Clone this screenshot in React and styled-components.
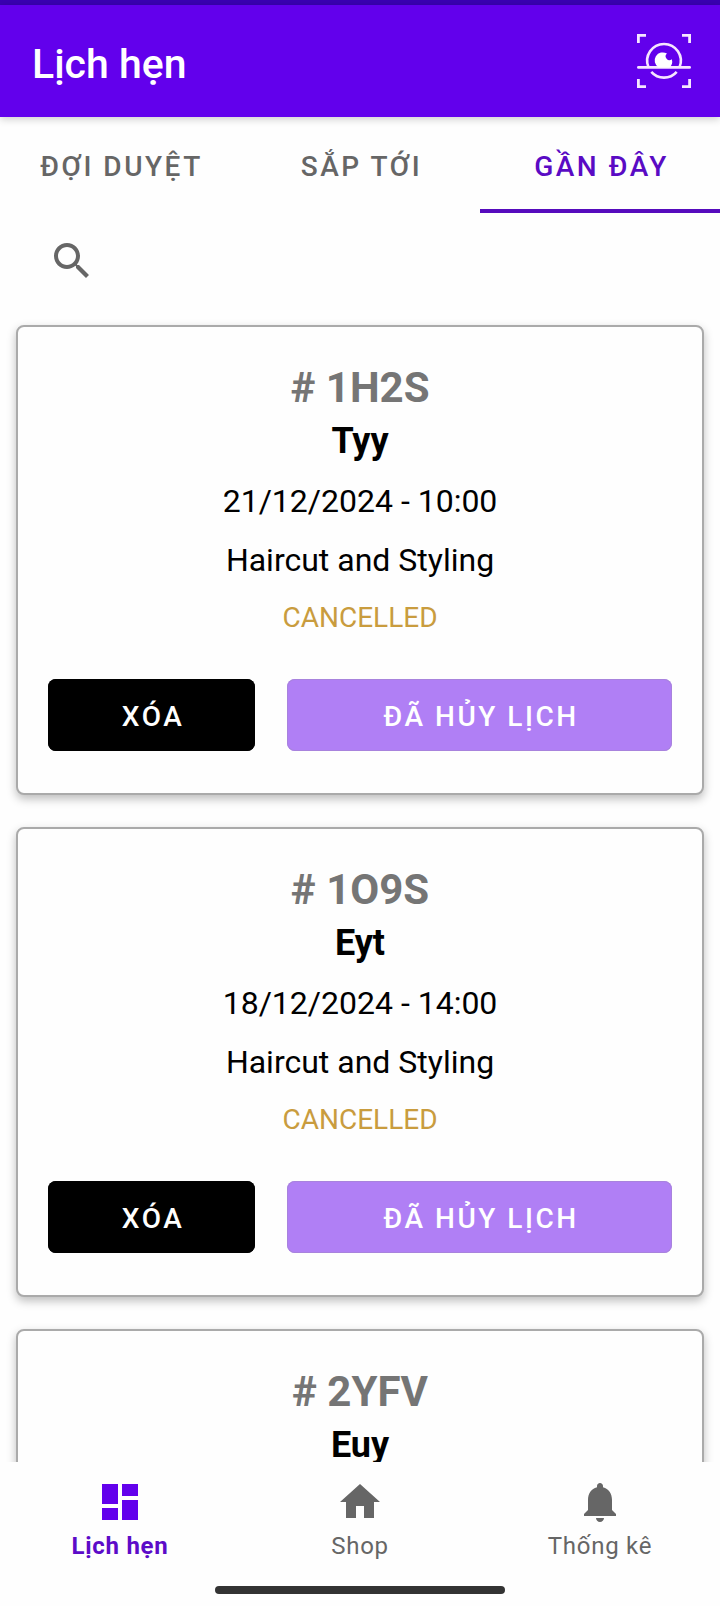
import React from "react";
import styled, { createGlobalStyle } from "styled-components";

const GlobalStyle = createGlobalStyle`
  *, *::before, *::after { box-sizing: border-box; }
  body {
    margin: 0;
    background: #fefefe;
    color: #000;
    font-family: Roboto, "Noto Sans", sans-serif;
  }
  button { font-family: inherit; border: 0; padding: 0; cursor: pointer; }
  h1, h2, h3, p { margin: 0; }
`;

const Screen = styled.div`
  display: flex;
  flex-direction: column;
  height: 100vh;
  overflow: hidden;
`;

const StatusBar = styled.div`
  flex: none;
  height: 5px;
  background: #3a00b2;
`;

const AppBar = styled.header`
  flex: none;
  display: flex;
  align-items: center;
  justify-content: space-between;
  height: 112px;
  padding: 0 24px 0 32px;
  background: #6200ec;
  color: #fff;
  box-shadow: 0 2px 8px rgba(0, 0, 0, 0.2);
`;

const Title = styled.h1`
  padding-top: 6px;
  font-size: 41px;
  line-height: 48px;
  font-weight: 500;
`;

const IconButton = styled.button`
  display: flex;
  align-items: center;
  justify-content: center;
  width: ${(p) => p.$size}px;
  height: ${(p) => p.$size}px;
  background: none;
  color: ${(p) => p.$color};
`;

const Tabs = styled.div`
  flex: none;
  display: grid;
  grid-template-columns: repeat(3, 1fr);
  height: 96px;
`;

const Tab = styled.button`
  padding: 8px 0 0 3px;
  background: none;
  border-bottom: 4px solid ${(p) => (p.$active ? "#560bbd" : "transparent")};
  color: ${(p) => (p.$active ? "#5a0bc4" : "#666")};
  font-size: 28px;
  line-height: 32px;
  font-weight: 500;
  letter-spacing: 0.09em;
`;

const SearchRow = styled.div`
  flex: none;
  display: flex;
  align-items: center;
  height: 96px;
  padding: 0 48px;
`;

const List = styled.main`
  flex: 1;
  min-height: 0;
  display: flex;
  flex-direction: column;
  gap: 32px;
  padding: 16px;
  overflow-y: auto;
  scrollbar-width: none;
`;

const Card = styled.article`
  flex: none;
  display: flex;
  flex-direction: column;
  padding: 35px 30px 42px;
  border: 2px solid #aaa;
  border-radius: 8px;
  background: #fefefe;
  text-align: center;
  box-shadow: 0 4px 10px rgba(0, 0, 0, 0.26);
`;

const Code = styled.h2`
  font-size: 42px;
  line-height: 52px;
  font-weight: 700;
  color: #757575;
`;

const Customer = styled.h3`
  font-size: 36px;
  line-height: 54px;
  font-weight: 700;
  margin-bottom: 4px;
`;

const Detail = styled.p`
  font-size: 32px;
  line-height: 59px;
`;

const Status = styled.p`
  font-size: 28px;
  line-height: 56px;
  color: #c99c3e;
`;

const Actions = styled.div`
  display: grid;
  grid-template-columns: 35fr 65fr;
  gap: 32px;
  margin-top: 33px;
`;

const ActionButton = styled.button`
  height: 72px;
  padding: 4px 0 0 3px;
  border-radius: 8px;
  background: ${(p) => (p.$muted ? "#b07ff5" : "#000")};
  box-shadow: inset 0 0 0 1px ${(p) => (p.$muted ? "#a883dd" : "#000")};
  color: #fff;
  font-size: 28px;
  line-height: 32px;
  font-weight: 500;
  letter-spacing: 0.09em;
`;

const BottomNav = styled.nav`
  flex: none;
  display: grid;
  grid-template-columns: repeat(3, 1fr);
  height: 112px;
`;

const NavItem = styled.a`
  display: flex;
  flex-direction: column;
  align-items: center;
  gap: 6px;
  padding-top: 16px;
  color: ${(p) => (p.$active ? "#5c0bc8" : "#666")};
  font-size: 24px;
  line-height: 28px;
  font-weight: ${(p) => (p.$active ? 700 : 400)};
  letter-spacing: 0.03em;
  text-decoration: none;

  svg { color: ${(p) => (p.$active ? "#6200ec" : "#666")}; }
`;

const GestureArea = styled.div`
  flex: none;
  display: flex;
  justify-content: center;
  height: 32px;
  padding-top: 12px;
`;

const GestureBar = styled.div`
  width: 290px;
  height: 8px;
  border-radius: 4px;
  background: #333;
`;

const Glyph = ({ d }) => (
  <svg width="48" height="48" viewBox="0 0 24 24" fill="currentColor" aria-hidden="true">
    <path d={d} />
  </svg>
);

const ICONS = {
  search:
    "M15.5 14h-.79l-.28-.27C15.41 12.59 16 11.11 16 9.5 16 5.91 13.09 3 9.5 3S3 5.91 3 9.5 5.91 16 9.5 16c1.61 0 3.09-.59 4.23-1.57l.27.28v.79l5 4.99L20.49 19l-4.99-5zm-6 0C7.01 14 5 11.99 5 9.5S7.01 5 9.5 5 14 7.01 14 9.5 11.99 14 9.5 14z",
  dashboard: "M3 13h8V3H3v10zm0 8h8v-6H3v6zm10 0h8V11h-8v10zm0-18v6h8V3h-8z",
  home: "M10 20v-6h4v6h5v-8h3L12 3 2 12h3v8z",
  bell: "M12 22c1.1 0 2-.9 2-2h-4c0 1.1.89 2 2 2zm6-6v-5c0-3.07-1.64-5.64-4.5-6.32V4c0-.83-.67-1.5-1.5-1.5s-1.5.67-1.5 1.5v.68C7.63 5.36 6 7.92 6 11v5l-2 2v1h16v-1l-2-2z",
};

const ScanIcon = () => (
  <svg width="54" height="54" viewBox="0 0 54 54" fill="none" stroke="#f6e6ff" aria-hidden="true">
    <path
      strokeWidth="2.8"
      d="M1.4 9V1.4H9M45 1.4h7.6V9M52.6 45v7.6H45M9 52.6H1.4V45"
    />
    <path strokeWidth="2.6" d="M11.4 33A16.8 16.8 0 1 1 42.6 33" />
    <path strokeWidth="2.6" d="M14.3 37.8A16.8 16.8 0 0 0 39.7 37.8" />
    <path strokeWidth="2.8" strokeLinecap="round" d="M1.4 33.4h51.2" />
    <path
      fill="#fff"
      stroke="none"
      d="M21.5 33.4A8 8 0 0 1 30 19.6A3.6 3.6 0 0 0 34.8 25.2A8 8 0 0 1 32.5 33.4Z"
    />
  </svg>
);

const tabs = ["ĐỢI DUYỆT", "SẮP TỚI", "GẦN ĐÂY"];

const appointments = [
  { code: "1H2S", name: "Tyy", time: "21/12/2024 - 10:00" },
  { code: "1O9S", name: "Eyt", time: "18/12/2024 - 14:00" },
  { code: "2YFV", name: "Euy", time: "18/12/2024 - 10:00" },
];

const navItems = [
  { label: "Lịch hẹn", icon: "dashboard" },
  { label: "Shop", icon: "home" },
  { label: "Thống kê", icon: "bell" },
];

const Appointment = ({ code, name, time }) => (
  <Card>
    <Code># {code}</Code>
    <Customer>{name}</Customer>
    <Detail>{time}</Detail>
    <Detail>Haircut and Styling</Detail>
    <Status>CANCELLED</Status>
    <Actions>
      <ActionButton type="button">XÓA</ActionButton>
      <ActionButton type="button" $muted>ĐÃ HỦY LỊCH</ActionButton>
    </Actions>
  </Card>
);

export default function App() {
  return (
    <Screen>
      <GlobalStyle />
      <StatusBar />
      <AppBar>
        <Title>Lịch hẹn</Title>
        <IconButton type="button" aria-label="Scan" $size={64} $color="#fff">
          <ScanIcon />
        </IconButton>
      </AppBar>
      <Tabs role="tablist">
        {tabs.map((label, i) => (
          <Tab key={label} type="button" role="tab" aria-selected={i === 2} $active={i === 2}>
            {label}
          </Tab>
        ))}
      </Tabs>
      <SearchRow>
        <IconButton type="button" aria-label="Search" $size={48} $color="#666">
          <Glyph d={ICONS.search} />
        </IconButton>
      </SearchRow>
      <List>
        {appointments.map((a) => (
          <Appointment key={a.code} {...a} />
        ))}
      </List>
      <BottomNav>
        {navItems.map((item, i) => (
          <NavItem key={item.label} href="#" $active={i === 0}>
            <Glyph d={ICONS[item.icon]} />
            <span>{item.label}</span>
          </NavItem>
        ))}
      </BottomNav>
      <GestureArea>
        <GestureBar />
      </GestureArea>
    </Screen>
  );
}
